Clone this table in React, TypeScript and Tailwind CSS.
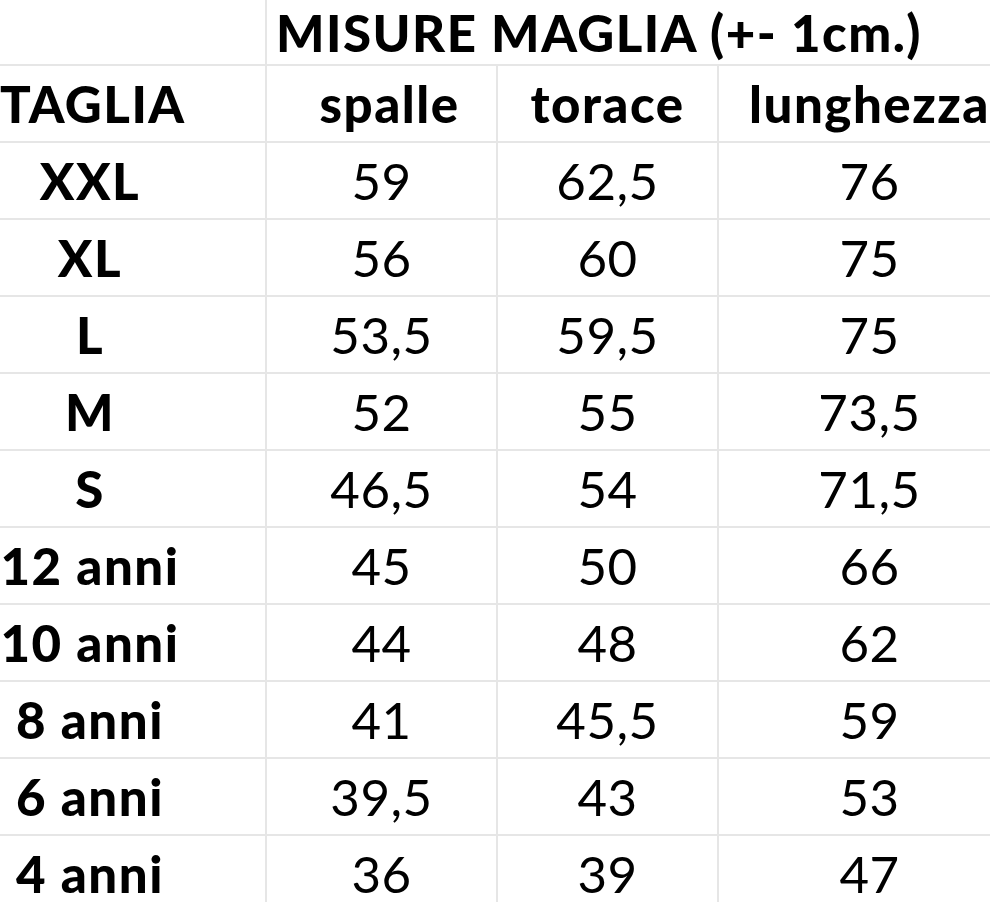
import React from "react";

const rows: [string, string, string, string][] = [
  ["XXL", "59", "62,5", "76"],
  ["XL", "56", "60", "75"],
  ["L", "53,5", "59,5", "75"],
  ["M", "52", "55", "73,5"],
  ["S", "46,5", "54", "71,5"],
  ["12 anni", "45", "50", "66"],
  ["10 anni", "44", "48", "62"],
  ["8 anni", "41", "45,5", "59"],
  ["6 anni", "39,5", "43", "53"],
  ["4 anni", "36", "39", "47"],
];

const cell =
  "flex items-center justify-center border-r-2 border-b-2 border-[#e6e6e6] whitespace-nowrap";
const bold = "font-black tracking-[1.5px]";

export default function App() {
  return (
    <div
      className="w-[990px] h-[902px] overflow-hidden bg-white text-black"
      style={{ fontFamily: "Lato, 'Liberation Sans', sans-serif" }}
    >
      <div className="grid w-[1022px] grid-cols-[267px_231px_221px_303px] grid-rows-[66px_repeat(11,77px)] text-[51px] leading-none tracking-[0.5px]">
        <div className="border-r-2 border-b-2 border-[#e6e6e6]" />
        <div className={"col-span-3 flex items-center border-b-2 border-[#e6e6e6] pl-[9px] " + bold}>
          MISURE MAGLIA (+- 1cm.)
        </div>

        <div className={cell + " justify-start"}>
          <div className={"w-[180px] text-center " + bold}>TAGLIA</div>
        </div>
        <div className={cell + " pl-[16px] " + bold}>spalle</div>
        <div className={cell + " " + bold}>torace</div>
        <div className={cell + " " + bold}>lunghezza</div>

        {rows.map((r) => (
          <React.Fragment key={r[0]}>
            <div className={cell + " justify-start"}>
              <div className={"w-[180px] text-center " + bold}>{r[0]}</div>
            </div>
            <div className={cell}>{r[1]}</div>
            <div className={cell}>{r[2]}</div>
            <div className={cell}>{r[3]}</div>
          </React.Fragment>
        ))}
      </div>
    </div>
  );
}
